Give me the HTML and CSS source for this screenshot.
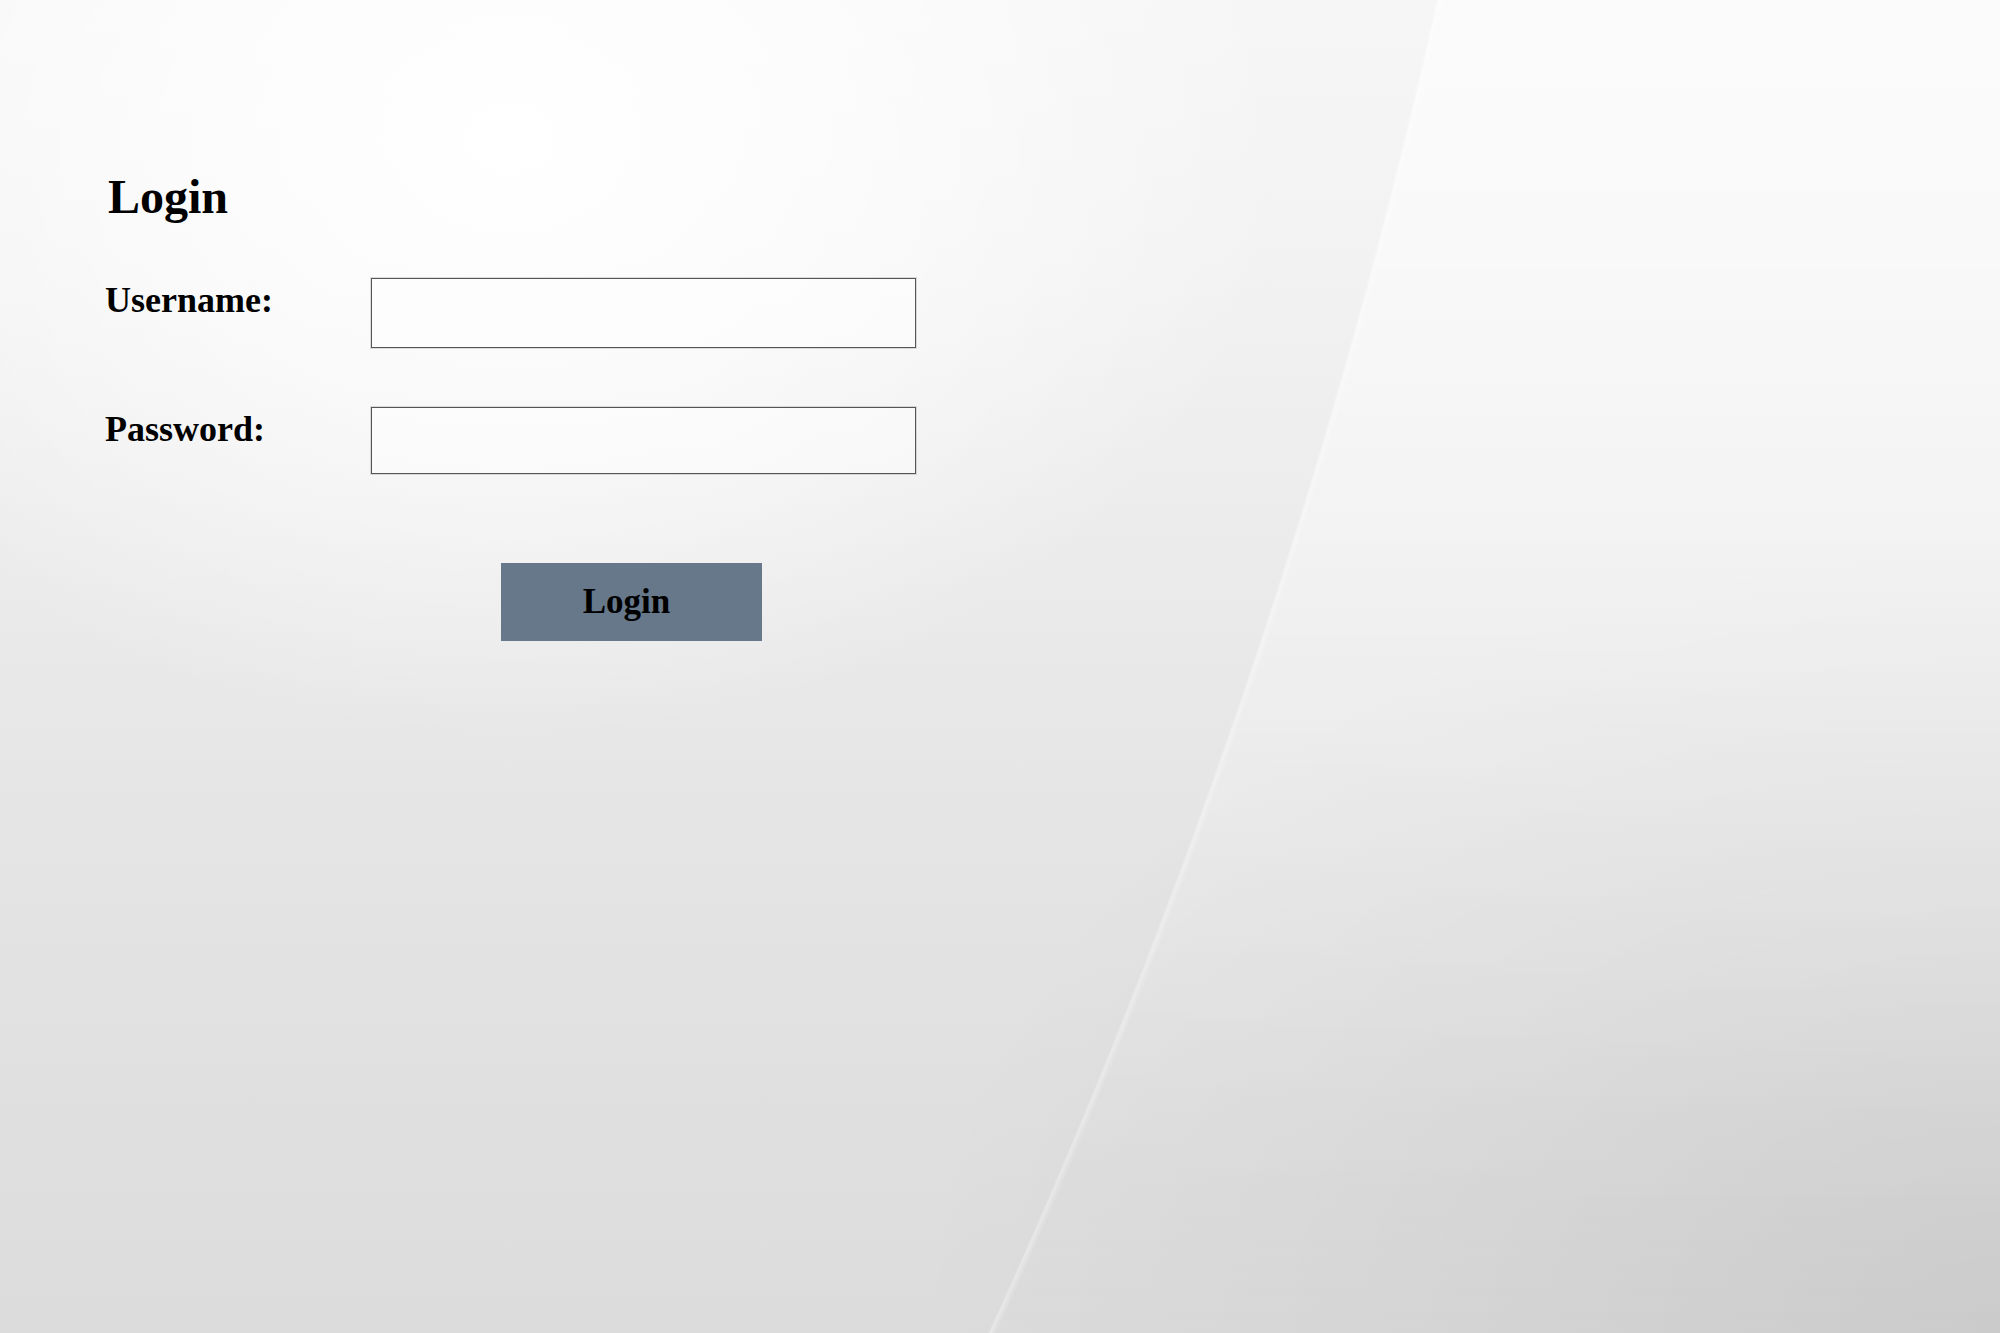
FILE: index.html
```html
<!DOCTYPE html>
<html lang="en">
<head>
<meta charset="utf-8">
<title>Login</title>
<link rel="stylesheet" href="styles.css">
</head>
<body>
  <main class="page">
    <h1 class="title">Login</h1>
    <form class="login-form" onsubmit="return false;">
      <label class="field-label" for="username">Username:</label>
      <input class="field-input field-input--user" id="username" type="text">
      <label class="field-label field-label--pass" for="password">Password:</label>
      <input class="field-input field-input--pass" id="password" type="password">
      <button class="login-button" type="submit">Login</button>
    </form>
  </main>
</body>
</html>
```

FILE: styles.css
```css
html, body {
  margin: 0;
  padding: 0;
}

body {
  font-family: "Liberation Serif", "Times New Roman", serif;
  color: #000;
  min-height: 1333px;
  background-color: #e6e6e6;
  background-image:
    radial-gradient(circle at -5053px -1438px, rgba(255,255,255,0) 6646px, rgba(255,255,255,0.35) 6648px, rgba(255,255,255,0) 6654px),
    radial-gradient(ellipse 1100px 800px at 2000px 1333px, rgba(0,0,0,0.08) 0%, rgba(0,0,0,0.03) 55%, rgba(0,0,0,0) 100%),
    radial-gradient(ellipse 780px 600px at 510px 140px, rgba(255,255,255,1) 0%, rgba(255,255,255,0.65) 45%, rgba(255,255,255,0) 100%),
    linear-gradient(to bottom, #f6f6f6 0%, #f2f2f2 20%, #eaeaea 45%, #e4e4e4 65%, #dfdfdf 85%, #dcdcdc 100%);
  background-repeat: no-repeat;
  background-size: 2000px 1333px;
}

body::before {
  content: "";
  position: absolute;
  left: 0;
  top: 0;
  width: 2000px;
  height: 1333px;
  z-index: -1;
  background: linear-gradient(to bottom, rgba(255,255,255,0.6) 0%, rgba(255,255,255,0.45) 30%, rgba(255,255,255,0.2) 60%, rgba(255,255,255,0.03) 85%, rgba(255,255,255,0) 100%);
  -webkit-mask-image: radial-gradient(circle at -5053px -1438px, transparent 6648px, #000 6649px);
  mask-image: radial-gradient(circle at -5053px -1438px, transparent 6648px, #000 6649px);
}

.page {
  padding: 169px 0 0 105px;
}

.title {
  margin: 0 0 53px 3px;
  font-size: 48px;
  line-height: 56px;
  font-weight: bold;
}

.login-form {
  display: grid;
  grid-template-columns: 266px 545px;
  align-items: start;
}

.field-label {
  font-size: 36px;
  line-height: 44px;
  font-weight: bold;
}

.field-input {
  box-sizing: border-box;
  width: 545px;
  margin: 0;
  border: 1px solid #555;
  box-shadow: 0 0 0 1px rgba(0,0,0,0.12);
  background: rgba(255,255,255,0.45);
  font-family: "Liberation Serif", serif;
  font-size: 24px;
  padding: 0 8px;
  outline: none;
}

.field-input--user {
  height: 70px;
}

.field-label--pass {
  margin-top: 59px;
}

.field-input--pass {
  height: 67px;
  margin-top: 59px;
}

.login-button {
  grid-column: 2;
  justify-self: start;
  margin: 89px 0 0 130px;
  width: 261px;
  height: 78px;
  border: none;
  padding: 0 10px 0 0;
  background: #66788a;
  color: #000;
  font-family: "Liberation Serif", serif;
  font-size: 35px;
  font-weight: bold;
  cursor: pointer;
}
```
